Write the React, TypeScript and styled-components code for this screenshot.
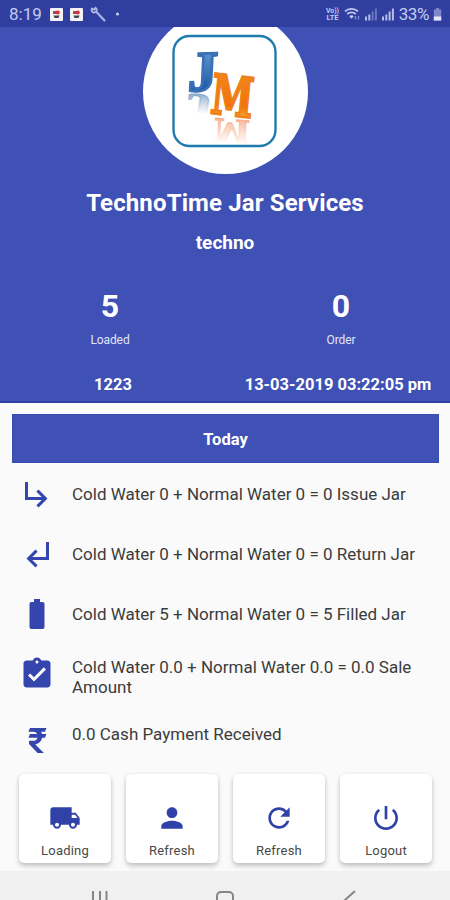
import React from "react";
import styled, { createGlobalStyle } from "styled-components";

const GlobalStyle = createGlobalStyle`
  *, *::before, *::after { box-sizing: border-box; }
  html, body { margin: 0; padding: 0; }
  body { font-family: Roboto, "Liberation Sans", sans-serif; background: #fafafa; }
  svg { display: block; flex: none; overflow: visible; }
`;

const Screen = styled.div`
  width: 450px;
  height: 900px;
  overflow: hidden;
  display: flex;
  flex-direction: column;
  background: #fafafa;
`;

const StatusBar = styled.header`
  height: 27px;
  flex: none;
  display: flex;
  align-items: center;
  justify-content: space-between;
  padding: 1px 8px 0 9px;
  background: #303f9f;
  color: #c3cbf0;
  font-size: 17px;
`;

const StatusGroup = styled.div<{ $gap: number }>`
  display: flex;
  align-items: center;
  gap: ${(p) => p.$gap}px;
`;

const Clock = styled.span`
  width: 33px;
  margin-right: 1px;
  white-space: nowrap;
`;

const BatteryText = styled.span`
  white-space: nowrap;
  letter-spacing: -0.4px;
`;

const Hero = styled.section`
  height: 376px;
  flex: none;
  overflow: hidden;
  display: flex;
  flex-direction: column;
  align-items: center;
  background: #3f51b5;
  border-bottom: 2px solid #3040a3;
  color: #fff;
`;

const Avatar = styled.div`
  width: 165px;
  height: 165px;
  margin-top: -18px;
  flex: none;
  border-radius: 50%;
  background: #fff;
  display: flex;
  justify-content: center;
  padding-top: 25px;
`;

const Title = styled.h1`
  margin: 14px 0 0;
  font-size: 24px;
  line-height: 30px;
  font-weight: 700;
  letter-spacing: 0.13px;
`;

const Subtitle = styled.h2`
  margin: 12px 0 0;
  font-size: 19px;
  line-height: 26px;
  font-weight: 700;
`;

const Stats = styled.div`
  width: 450px;
  margin-top: 30px;
  display: grid;
  grid-template-columns: 220px 242px;
`;

const Stat = styled.div`
  display: flex;
  flex-direction: column;
  align-items: center;
`;

const StatValue = styled.span`
  font-size: 32px;
  line-height: 40px;
  font-weight: 700;
`;

const StatLabel = styled.span`
  margin-top: 5px;
  font-size: 12px;
  line-height: 18px;
  letter-spacing: -0.1px;
  color: #e1e5fa;
`;

const Meta = styled.div`
  width: 450px;
  margin-top: 24px;
  display: grid;
  grid-template-columns: 226px 224px;
  text-align: center;
  font-size: 16.5px;
  line-height: 24px;
  font-weight: 700;
  white-space: nowrap;
`;

const Content = styled.main`
  height: 468px;
  flex: none;
  padding: 11px 11px 0 12px;
`;

const Banner = styled.div`
  height: 49px;
  display: flex;
  align-items: center;
  justify-content: center;
  padding-top: 2px;
  background: #3f51b5;
  border: 1px solid #3a4bb0;
  color: #fff;
  font-size: 16.5px;
  font-weight: 700;
`;

const List = styled.ul`
  list-style: none;
  margin: 1px 0 0;
  padding: 0;
`;

const Row = styled.li`
  height: 60px;
  display: flex;
  align-items: flex-start;
  padding: 12px 0 0 6.6px;
  color: #3c3c3c;
  svg { fill: #3445ae; }
`;

const IconSlot = styled.span<{ $drop: number }>`
  padding-top: ${(p) => p.$drop}px;
`;

const RowText = styled.span<{ $lines: number }>`
  margin: ${(p) => (p.$lines > 1 ? 1 : 8)}px 0 0 17.4px;
  font-size: 17px;
  line-height: 20px;
  white-space: pre-line;
`;

const Actions = styled.nav`
  display: grid;
  grid-template-columns: repeat(4, 92px);
  gap: 15px;
  margin-top: 10px;
  padding-left: 7px;
`;

const ActionCard = styled.button`
  height: 89px;
  border: 0;
  border-radius: 5px;
  padding: 28px 0 0;
  display: flex;
  flex-direction: column;
  align-items: center;
  background: #fff;
  box-shadow: 0 3px 5px rgba(0, 0, 0, 0.22), 0 0 3px rgba(0, 0, 0, 0.06);
  font-family: inherit;
  color: #484848;
  svg { fill: #3041a8; }
`;

const ActionLabel = styled.span`
  margin-top: 8px;
  font-size: 13px;
  line-height: 18px;
  letter-spacing: 0.2px;
`;

const SystemNav = styled.footer`
  height: 29px;
  flex: none;
  display: grid;
  grid-template-columns: repeat(3, 125px);
  justify-content: center;
  justify-items: center;
  padding-top: 19px;
  background: #f0f0f0;
`;

const PATHS = {
  issue: "M19 15l-6 6-1.42-1.42L15.17 16H4V4h2v10h9.17l-3.59-3.58L13 9l6 6z",
  giveBack: "M11 9l1.42 1.42L8.83 14H18V4h2v12H8.83l3.59 3.58L11 21l-6-6 6-6z",
  battery:
    "M15.67 4H14V2h-4v2H8.33C7.6 4 7 4.6 7 5.33v15.33C7 21.4 7.6 22 8.33 22h7.33c.74 0 1.34-.6 1.34-1.33V5.33C17 4.6 16.4 4 15.67 4z",
  task: "M19 3h-4.18C14.4 1.84 13.3 1 12 1c-1.3 0-2.4.84-2.82 2H5c-1.1 0-2 .9-2 2v14c0 1.1.9 2 2 2h14c1.1 0 2-.9 2-2V5c0-1.1-.9-2-2-2zm-7 0c.55 0 1 .45 1 1s-.45 1-1 1-1-.45-1-1 .45-1 1-1zm-2 14l-4-4 1.41-1.41L10 14.17l6.59-6.59L18 9l-8 8z",
  rupee:
    "M7.3 2.6h11l-1 2.5h-2.6c.3.5.6 1 .7 1.5h2.9l-1 2.5h-1.9c-.5 2.3-2.2 4-4.500 4.500l5.700 5.700h-4.200L6.700 13.400v-2.200h2.800c1.500 0 2.500-.8 2.900-2.100H6.300l1-2.500h4.800c-.5-.9-1.400-1.500-2.600-1.500H6.300z",
  truck:
    "M20 8h-3V4H3c-1.1 0-2 .9-2 2v11h2c0 1.66 1.34 3 3 3s3-1.34 3-3h6c0 1.66 1.34 3 3 3s3-1.34 3-3h2v-5l-3-4zM6 18.5c-.83 0-1.5-.67-1.5-1.5s.67-1.5 1.5-1.5 1.5.67 1.5 1.5-.67 1.5-1.5 1.5zm13.5-9l1.96 2.5H17V9.5h2.5zm-1.5 9c-.83 0-1.5-.67-1.5-1.5s.67-1.5 1.5-1.5 1.5.67 1.5 1.5-.67 1.5-1.5 1.5z",
  person:
    "M12 12c2.21 0 4-1.79 4-4s-1.79-4-4-4-4 1.79-4 4 1.79 4 4 4zm0 2c-2.67 0-8 1.34-8 4v2h16v-2c0-2.66-5.33-4-8-4z",
  refresh:
    "M17.65 6.35C16.2 4.9 14.21 4 12 4c-4.42 0-7.99 3.58-7.99 8s3.57 8 7.99 8c3.73 0 6.84-2.55 7.73-6h-2.08c-.82 2.33-3.04 4-5.65 4-3.31 0-6-2.69-6-6s2.69-6 6-6c1.66 0 3.14.69 4.22 1.78L13 11h7V4l-2.35 2.35z",
  power:
    "M13 3h-2v10h2V3zm4.83 2.17l-1.42 1.42C17.99 7.86 19 9.81 19 12c0 3.87-3.13 7-7 7s-7-3.13-7-7c0-2.19 1.01-4.14 2.58-5.42L6.17 5.17C4.23 6.82 3 9.26 3 12c0 4.97 4.03 9 9 9s9-4.03 9-9c0-2.74-1.23-5.18-3.17-6.83z",
};

function Icon({ name, size }: { name: keyof typeof PATHS; size: number }) {
  return (
    <svg width={size} height={size} viewBox="0 0 24 24">
      <path d={PATHS[name]} />
    </svg>
  );
}

function Logo() {
  return (
    <svg width="106" height="114" viewBox="0 0 106 114" fontFamily="DejaVu Serif, Liberation Serif, serif" fontWeight="700">
      <defs>
        <linearGradient id="blue" x1="0" y1="0" x2="0" y2="1">
          <stop offset="0.2" stopColor="#5f91cc" />
          <stop offset="0.75" stopColor="#1f5fae" />
        </linearGradient>
        <linearGradient id="orange" x1="0" y1="0" x2="0" y2="1">
          <stop offset="0" stopColor="#f58a1e" />
          <stop offset="0.65" stopColor="#f2730c" />
          <stop offset="0.8" stopColor="#fba62c" />
        </linearGradient>
        <linearGradient id="blueFade" x1="0" y1="0" x2="0" y2="1">
          <stop offset="0.3" stopColor="#8fb0cf" stopOpacity="0" />
          <stop offset="0.85" stopColor="#6f97bd" stopOpacity="0.8" />
        </linearGradient>
        <linearGradient id="orangeFade" x1="0" y1="0" x2="0" y2="1">
          <stop offset="0.15" stopColor="#f7b48c" stopOpacity="0" />
          <stop offset="0.85" stopColor="#f3a176" stopOpacity="0.8" />
        </linearGradient>
      </defs>
      <rect x="1.5" y="2" width="102" height="110" rx="16" fill="#fff" stroke="#1f7aad" strokeWidth="2.4" />
      <g fontFamily="Liberation Serif, serif">
        <text transform="matrix(0.98 0.03 0.1 -0.6 15 60)" fontSize="58" fill="url(#blueFade)" stroke="url(#blueFade)" strokeWidth="1.5">J</text>
      </g>
      <text transform="matrix(0.66 0.05 0.02 -0.66 42 84)" fontSize="50" fill="url(#orangeFade)" stroke="url(#orangeFade)" strokeWidth="1.5">M</text>
      <g fontFamily="Liberation Serif, serif">
        <text transform="matrix(1.02 -0.02 -0.05 1 15.5 57)" fontSize="57" fill="url(#blue)" stroke="#3a70b4" strokeWidth="2.6">J</text>
      </g>
      <text transform="matrix(0.72 0.084 -0.1 1.03 37.500 79)" fontSize="53" fill="url(#orange)" stroke="#ee8119" strokeWidth="2.4">M</text>
    </svg>
  );
}

function AppNotice() {
  return (
    <svg width="13" height="13" viewBox="0 0 13 13">
      <rect width="13" height="13" rx="1" fill="#f4f2f5" />
      <rect x="3" y="3" width="4" height="3" fill="#8d5450" />
      <circle cx="7.8" cy="4.6" r="2" fill="#d8323c" />
      <path d="M3.5 7.5h6l-1 2.5h-4z" fill="#44444c" />
    </svg>
  );
}

function Wrench() {
  return (
    <svg width="16" height="16" viewBox="0 0 16 16" fill="none" stroke="#aeb8e6" strokeLinecap="round">
      <path d="M6.5 6l8 8.500" strokeWidth="2" />
      <path d="M2 2.5a2.6 2.6 0 1 0 3.5-.8L4.5 3.500z" strokeWidth="1.8" />
    </svg>
  );
}

function Volte() {
  return (
    <svg width="14" height="14" viewBox="0 0 14 14" fill="#c3cbf0" fontFamily="Roboto, sans-serif" fontWeight="700" fontSize="7.5">
      <text x="0" y="6.2" textLength="13" lengthAdjust="spacingAndGlyphs">Vo))</text>
      <text x="0.5" y="13.2" textLength="12" lengthAdjust="spacingAndGlyphs">LTE</text>
    </svg>
  );
}

function Wifi() {
  return (
    <svg width="17" height="14" viewBox="0 0 17 14" fill="none" stroke="#c3cbf0" strokeWidth="1.7">
      <path d="M1 4.4a9.4 9.4 0 0 1 13 0M3.3 7a6.2 6.2 0 0 1 8.4 0" />
      <path d="M5.3 9.2a3.3 3.3 0 0 1 4.4 0L7.5 11.8z" fill="#c3cbf0" stroke="none" />
      <path d="M11.5 9v3.5M14.5 9v3.5" strokeWidth="1.2" opacity="0.6" />
    </svg>
  );
}

function Signal({ bars }: { bars: number }) {
  return (
    <svg width="13" height="13" viewBox="0 0 13 13" fill="#c3cbf0">
      {[4, 6, 9, 12].map((h, i) => (
        <rect key={h} x={i * 3.3} y={12.5 - h} width="2" height={h} opacity={i < bars ? 0.9 : 0.4} />
      ))}
    </svg>
  );
}

function Battery() {
  return (
    <svg width="9" height="13" viewBox="0 0 9 13">
      <path d="M3 0h3v1.5h2.2v11H.8v-11H3z" fill="#7d89c9" />
      <path d="M.8 8.5h7.4v4H.8z" fill="#e5e9fb" />
    </svg>
  );
}

const rows: { icon: keyof typeof PATHS; text: string; lines: number; drop: number }[] = [
  { icon: "issue", text: "Cold Water 0 + Normal Water 0 = 0 Issue Jar", lines: 1, drop: 0 },
  { icon: "giveBack", text: "Cold Water 0 + Normal Water 0 = 0 Return Jar", lines: 1, drop: 0 },
  { icon: "battery", text: "Cold Water 5 + Normal Water 0 = 5 Filled Jar", lines: 1, drop: 0 },
  { icon: "task", text: "Cold Water 0.0 + Normal Water 0.0 = 0.0 Sale\nAmount", lines: 2, drop: 0 },
  { icon: "rupee", text: "0.0 Cash Payment Received", lines: 1, drop: 8 },
];

const actions: { icon: keyof typeof PATHS; label: string }[] = [
  { icon: "truck", label: "Loading" },
  { icon: "person", label: "Refresh" },
  { icon: "refresh", label: "Refresh" },
  { icon: "power", label: "Logout" },
];

export default function App() {
  return (
    <>
      <GlobalStyle />
      <Screen>
        <StatusBar>
          <StatusGroup $gap={7}>
            <Clock>8:19</Clock>
            <AppNotice />
            <AppNotice />
            <Wrench />
            <svg width="14" height="4" viewBox="0 0 14 4">
              <circle cx="4.5" cy="2" r="1.6" fill="#c3cbf0" />
            </svg>
          </StatusGroup>
          <StatusGroup $gap={4}>
            <Volte />
            <Wifi />
            <Signal bars={2} />
            <Signal bars={4} />
            <BatteryText>33%</BatteryText>
            <Battery />
          </StatusGroup>
        </StatusBar>
        <Hero>
          <Avatar>
            <Logo />
          </Avatar>
          <Title>TechnoTime Jar Services</Title>
          <Subtitle>techno</Subtitle>
          <Stats>
            <Stat>
              <StatValue>5</StatValue>
              <StatLabel>Loaded</StatLabel>
            </Stat>
            <Stat>
              <StatValue>0</StatValue>
              <StatLabel>Order</StatLabel>
            </Stat>
          </Stats>
          <Meta>
            <span>1223</span>
            <span>13-03-2019 03:22:05 pm</span>
          </Meta>
        </Hero>
        <Content>
          <Banner>Today</Banner>
          <List>
            {rows.map((r) => (
              <Row key={r.icon}>
                <IconSlot $drop={r.drop}>
                  <Icon name={r.icon} size={36} />
                </IconSlot>
                <RowText $lines={r.lines}>{r.text}</RowText>
              </Row>
            ))}
          </List>
          <Actions>
            {actions.map((a) => (
              <ActionCard key={a.icon}>
                <Icon name={a.icon} size={32} />
                <ActionLabel>{a.label}</ActionLabel>
              </ActionCard>
            ))}
          </Actions>
        </Content>
        <SystemNav>
          <svg width="20" height="20" viewBox="0 0 20 20" fill="#858585">
            <path d="M2 1h2v18H2zM9 1h2v18H9zM15.5 1h2v18h-2z" />
          </svg>
          <svg width="20" height="20" viewBox="0 0 20 20" fill="none" stroke="#858585" strokeWidth="2">
            <rect x="2" y="2" width="16" height="16" rx="4" />
          </svg>
          <svg width="20" height="20" viewBox="0 0 20 20" fill="none" stroke="#858585" strokeWidth="2">
            <path d="M15 1L5 10l10 9" />
          </svg>
        </SystemNav>
      </Screen>
    </>
  );
}
